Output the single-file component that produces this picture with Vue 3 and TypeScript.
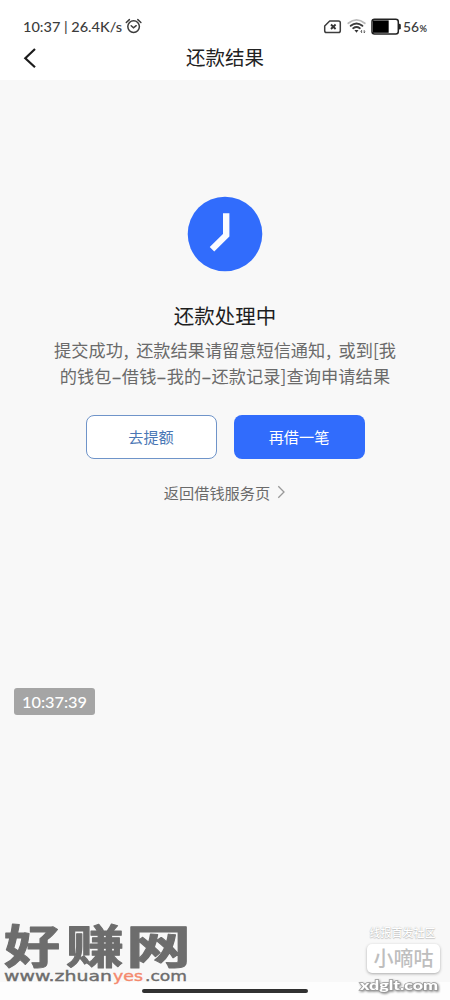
<script setup lang="ts">
const network = '10:37 | 26.4K/s'
const battery = 56
const firstLine = ['提交成功', ',', '还款结果请留意短信通知', ',', '或到[我']
const secondLine = ['的钱包', '–', '借钱', '–', '我的', '–', '还款记录]查询申请结果']
const isNarrow = (part: string) => part === ',' || part === '–'
</script>

<template>
  <div class="screen">
    <header>
      <div class="status">
        <svg class="status-left" width="150" height="24" viewBox="0 0 150 24">
          <text x="23" y="17.5" textLength="99" lengthAdjust="spacingAndGlyphs">{{ network }}</text>
          <g fill="none" stroke="#3c3c3c" stroke-width="1.5" stroke-linecap="round">
            <circle cx="133.6" cy="12.6" r="5.8" />
            <path d="M126.3 8.5 L129.4 5.6 M137.8 5.6 L140.9 8.5 M131.2 11.8 L133.5 13.8 L136.2 11.7" />
          </g>
        </svg>
        <svg class="status-right" width="130" height="24" viewBox="320 0 130 24">
          <path d="M329.7 7 H338.5 Q340.3 7 340.3 8.8 V16.7 Q340.3 18.5 338.5 18.5 H326.5 Q324.7 18.5 324.7 16.7 V12 Z" fill="none" stroke="#3c3c3c" stroke-width="1.5" stroke-linejoin="round" />
          <path d="M331 10.5 L335.6 15 M335.6 10.5 L331 15" stroke="#333" stroke-width="1.8" />
          <g fill="none" stroke-linecap="round">
            <path d="M348.3 9.3 Q356.5 2.4 364.8 9.3" stroke="#bbb" stroke-width="1.8" />
            <path d="M350.7 11.8 Q356.5 7 362.4 11.8" stroke="#3c3c3c" stroke-width="1.9" />
            <path d="M353.2 14.2 Q356.5 11.7 359.8 14.2" stroke="#3c3c3c" stroke-width="1.9" />
          </g>
          <path d="M354.4 15.9 H358.5 L356.5 18.8 Z" fill="#333" />
          <path d="M361.6 19 V16.3 M360.6 17.5 L361.6 16.4 M364.2 16.2 V19 M365.1 17.7 L364.2 18.9" stroke="#555" stroke-width=".9" />
          <rect x="372" y="5.3" width="26.3" height="14.6" rx="2.5" fill="#fff" stroke="#222" stroke-width="1.5" />
          <rect x="373" y="6.4" :width="battery * 0.28" height="12.4" fill="#000" />
          <path d="M399 9.7 Q400.8 9.7 400.8 11 V14.2 Q400.8 15.5 399 15.5 Z" fill="#222" />
          <text x="403" y="17.6" textLength="16" lengthAdjust="spacingAndGlyphs">{{ battery }}</text>
          <text class="percent" x="419.5" y="17.6" textLength="7.5" lengthAdjust="spacingAndGlyphs">%</text>
        </svg>
      </div>
      <nav>
        <svg class="back" width="14" height="22" viewBox="0 0 14 22"><path d="M12 2 L2.3 11.2 L12 20.3" fill="none" stroke="#1c1c1c" stroke-width="2.2" /></svg>
        <h1>还款结果</h1>
      </nav>
    </header>

    <main>
      <svg class="clock" width="76" height="76" viewBox="0 0 76 76">
        <circle cx="38" cy="38" r="37.3" fill="#316cfc" />
        <path d="M39.2 17.3 V39.2 L25 53.2" fill="none" stroke="#fafbff" stroke-width="6.4" />
      </svg>
      <h2>还款处理中</h2>
      <div class="message">
        <p><span v-for="(part, i) in firstLine" :key="i" :class="{ comma: isNarrow(part) }">{{ part }}</span></p>
        <p class="second"><span v-for="(part, i) in secondLine" :key="i" :class="{ dash: isNarrow(part) }">{{ part }}</span></p>
      </div>
      <div class="actions">
        <button class="outline">去提额</button>
        <button class="solid">再借一笔</button>
      </div>
      <a class="return">返回借钱服务页
        <svg width="9" height="14" viewBox="0 0 9 14"><path d="M1.3 1.3 L7 7 L1.3 12.7" fill="none" stroke="#999" stroke-width="1.3" /></svg>
      </a>
    </main>

    <div class="bottom"></div>
    <div class="home-bar"></div>
    <div class="timestamp"><svg width="81" height="27" viewBox="0 0 81 27"><text x="8" y="19.7" textLength="65" lengthAdjust="spacingAndGlyphs">10:37:39</text></svg></div>

    <svg class="brand" width="200" height="90" viewBox="0 0 200 90">
      <g class="brand-name">
        <text x="4" y="57.5" textLength="56" lengthAdjust="spacingAndGlyphs">好</text>
        <text x="66" y="57.5" textLength="58" lengthAdjust="spacingAndGlyphs">赚</text>
        <text x="126" y="57.5" textLength="65" lengthAdjust="spacingAndGlyphs">网</text>
      </g>
      <g class="brand-url">
        <text x="4" y="75.5" textLength="108" lengthAdjust="spacingAndGlyphs">www.zhuan</text>
        <text class="accent" x="113" y="75.5" textLength="30" lengthAdjust="spacingAndGlyphs">yes</text>
        <text x="145" y="75.5" textLength="42" lengthAdjust="spacingAndGlyphs">.com</text>
      </g>
    </svg>

    <div class="community">
      <small>线报首发社区</small>
      <strong>小嘀咕</strong>
      <svg width="84" height="20" viewBox="0 0 84 20"><text x="2" y="13" textLength="78" lengthAdjust="spacingAndGlyphs">xdglt.com</text></svg>
    </div>
  </div>
</template>

<style>
body { margin: 0; }
</style>

<style scoped>
* { box-sizing: border-box; }
.screen { position: relative; display: flex; flex-direction: column; width: 450px; height: 1000px; overflow: hidden; background: #f8f8f8; font-family: "Noto Sans CJK SC", sans-serif; }
header { height: 80px; flex: none; background: #fff; }
.status { display: flex; justify-content: space-between; height: 38px; padding-top: 14px; }
.status text { font: 500 14px Lato, sans-serif; fill: #3c3c3c; }
.status .percent { font-size: 10px; font-weight: 700; }
nav { display: flex; align-items: center; justify-content: center; height: 40px; position: relative; }
.back { position: absolute; left: 23px; top: 9px; }
h1 { margin: -2px 0 0; font-size: 19.5px; line-height: 40px; font-weight: 400; color: #222; }
main { flex: 1; display: flex; flex-direction: column; align-items: center; padding-top: 116px; }
.clock { flex: none; }
h2 { margin: 28px 0 0; font-size: 20.5px; line-height: 30px; font-weight: 400; color: #1e1e1e; }
.message { margin-top: 7px; color: #6a6a6a; font-size: 17.2px; line-height: 26px; }
p { display: flex; justify-content: center; margin: 0; white-space: nowrap; }
.second { letter-spacing: .1px; }
.comma { width: 13.3px; padding-left: 1px; }
.dash { width: 10.2px; text-align: center; -webkit-text-stroke: .3px #6a6a6a; }
.actions { display: flex; gap: 17px; margin-top: 26px; }
button { width: 131px; height: 44px; padding: 0 0 2px; border-radius: 8px; font: 15.2px "Noto Sans CJK SC", sans-serif; }
.outline { border: 1px solid #6f94c9; background: #fff; color: #4a77b5; }
.solid { border: 0; background: #316cfc; color: #fff; }
.return { display: flex; align-items: center; gap: 7px; margin-top: 21px; font-size: 15.2px; line-height: 24px; color: #6a6a6a; }
.bottom { height: 18px; flex: none; background: #fdfdfd; }
.home-bar { position: absolute; left: 142px; top: 988.5px; width: 166px; height: 4.5px; border-radius: 3px; background: #303030; }
.timestamp { position: absolute; left: 14px; top: 688px; width: 81px; height: 27px; border-radius: 3px; background: #a5a5a5; }
.timestamp svg { display: block; }
.timestamp text { font: 500 16px Lato, sans-serif; fill: #fff; }
.brand { position: absolute; left: 0; top: 905px; }
.brand-name text { font: 700 46px "Liberation Sans", "Noto Sans CJK SC", sans-serif; fill: #6d6d6d; stroke: #6d6d6d; stroke-width: 1px; stroke-linejoin: round; }
.brand-url text { font: 400 14.5px "DejaVu Sans", sans-serif; fill: #6d6d6d; stroke: #6d6d6d; stroke-width: .4px; }
.brand-url .accent { fill: #f4896d; stroke: #f4896d; }
.community { position: absolute; left: 358px; top: 924px; width: 84px; display: flex; flex-direction: column; align-items: center; }
small { font-size: 11px; line-height: 17px; font-weight: 500; color: #fff; text-shadow: 0 0 1px #aaa, 0 1px 1px #ccc; margin-left: 5px; white-space: nowrap; }
strong { width: 73px; height: 29px; margin: 3px 0 0 7px; border-radius: 5px; background: #fff; box-shadow: 0 1px 3px #aaa; color: #bebebe; text-align: center; font-size: 20px; line-height: 28px; font-weight: 500; }
.community svg { margin-top: 4px; overflow: visible; }
.community svg text { font: 900 14px Lato, sans-serif; fill: #fff; stroke: #999; stroke-width: 1.4px; paint-order: stroke; filter: drop-shadow(1px 1px 1px #888); }
</style>
